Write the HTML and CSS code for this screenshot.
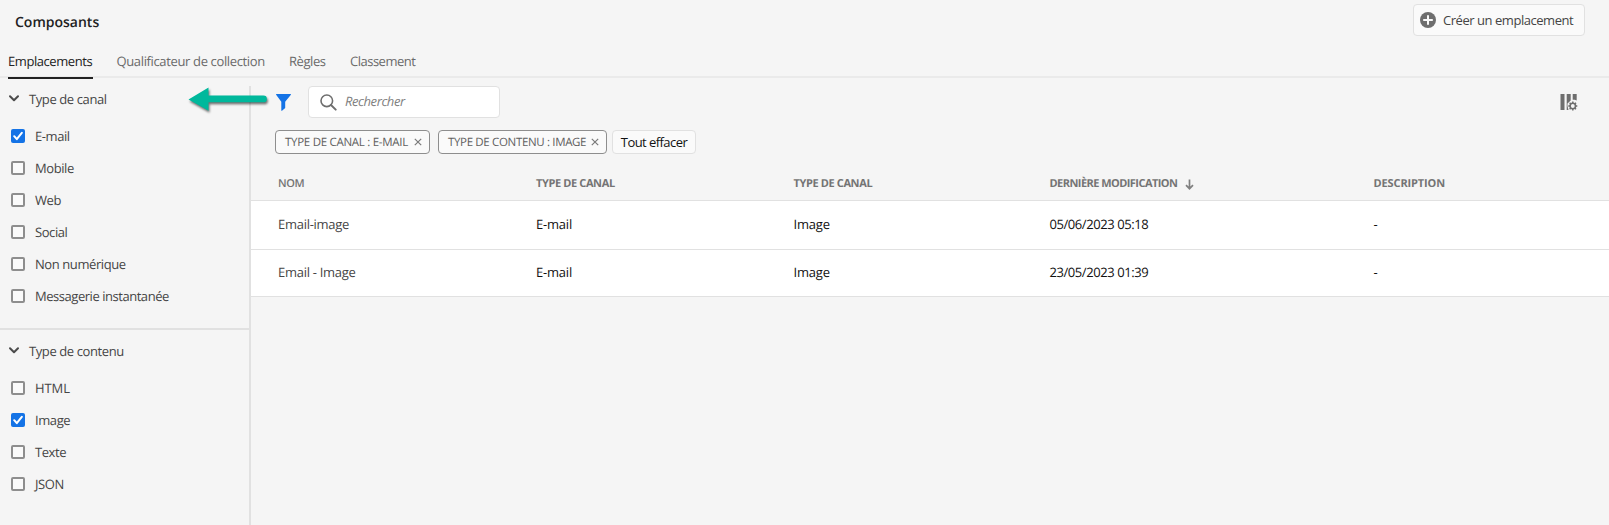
FILE: index.html
```
<!DOCTYPE html>
<html lang="fr">
<head>
<meta charset="utf-8">
<title>Composants</title>
<link rel="stylesheet" href="styles.css">
</head>
<body>
<header class="header">
  <h1 class="title">Composants</h1>
  <button class="create">
    <svg width="16" height="16" viewBox="0 0 16 16"><circle cx="8" cy="8" r="8" fill="#6e6e6e"/><path d="M8 3.2v9.6M3.2 8h9.6" stroke="#fafafa" stroke-width="2"/></svg>
    <span>Créer un emplacement</span>
  </button>
</header>
<nav class="tabs">
  <a class="tab tab-on t1">Emplacements</a>
  <a class="tab t2">Qualificateur de collection</a>
  <a class="tab t3">Règles</a>
  <a class="tab t4">Classement</a>
</nav>
<div class="body">
  <aside class="side">
    <section class="group">
      <h2 class="group-title"><svg class="chev" width="10" height="7" viewBox="0 0 10 7"><path d="M1 1.2l4 4 4-4" fill="none" stroke="#4b4b4b" stroke-width="2" stroke-linecap="round" stroke-linejoin="round"/></svg>Type de canal</h2>
      <label class="opt"><i class="box on"><svg width="10" height="10" viewBox="0 0 10 10"><path d="M1.2 5.2l2.6 3L8.8 1.8" fill="none" stroke="#fff" stroke-width="2" stroke-linecap="round" stroke-linejoin="round"/></svg></i>E-mail</label>
      <label class="opt"><i class="box"></i>Mobile</label>
      <label class="opt"><i class="box"></i>Web</label>
      <label class="opt"><i class="box"></i>Social</label>
      <label class="opt"><i class="box"></i>Non numérique</label>
      <label class="opt long"><i class="box"></i>Messagerie instantanée</label>
    </section>
    <section class="group">
      <h2 class="group-title"><svg class="chev" width="10" height="7" viewBox="0 0 10 7"><path d="M1 1.2l4 4 4-4" fill="none" stroke="#4b4b4b" stroke-width="2" stroke-linecap="round" stroke-linejoin="round"/></svg>Type de contenu</h2>
      <label class="opt caps"><i class="box"></i>HTML</label>
      <label class="opt"><i class="box on"><svg width="10" height="10" viewBox="0 0 10 10"><path d="M1.2 5.2l2.6 3L8.8 1.8" fill="none" stroke="#fff" stroke-width="2" stroke-linecap="round" stroke-linejoin="round"/></svg></i>Image</label>
      <label class="opt"><i class="box"></i>Texte</label>
      <label class="opt"><i class="box"></i>JSON</label>
    </section>
    <svg class="arrow" width="84" height="32" viewBox="0 0 84 32"><path d="M1.500 13.500L21.500 1.500v8h55a3.200 3.200 0 0 1 0 6.800h-55v8.500z" fill="#00b89c"/></svg>
  </aside>
  <main class="main">
    <div class="toolbar">
      <svg class="funnel" width="15" height="17" viewBox="0 0 15 17"><path d="M.5 0h14a.5.5 0 0 1 .4.8L9.2 7.800v6.200L6 16.700a.4.4 0 0 1-.7-.3V7.800L.1.800A.5.5 0 0 1 .5 0z" fill="#1473e6"/></svg>
      <div class="search">
        <svg width="17" height="17" viewBox="0 0 17 17"><circle cx="6.800" cy="6.800" r="5.800" fill="none" stroke="#6e6e6e" stroke-width="1.600"/><path d="M11 11l4.700 4.700" stroke="#6e6e6e" stroke-width="1.900" stroke-linecap="round"/></svg>
        <span>Rechercher</span>
      </div>
      <svg class="columns" width="18" height="18" viewBox="0 0 18 18"><path d="M.5 1h4v16h-4zM6.700 1h4v6.500L7.500 10.500v2.500l1 4H6.700zM12.700 1h4v6.500l-2-.8h-2z" fill="#6e6e6e"/><circle cx="12.800" cy="13" r="2.700" fill="none" stroke="#6e6e6e" stroke-width="1.600"/><path d="M12.800 8.500v1.700M12.800 15.800v1.700M8.300 13h1.700M15.600 13h1.700M9.600 9.800l1.200 1.200M14.800 15l1.200 1.200M9.600 16.200l1.200-1.200M14.800 11l1.200-1.200" stroke="#6e6e6e" stroke-width="1.500"/></svg>
    </div>
    <div class="chips">
      <span class="chip chip-a"><span>TYPE DE CANAL : E-MAIL</span><svg width="8" height="8" viewBox="0 0 8 8"><path d="M.8.8l6.400 6.400M7.200.8L.8 7.200" stroke="#7a7a7a" stroke-width="1.200"/></svg></span>
      <span class="chip chip-b"><span>TYPE DE CONTENU : IMAGE</span><svg width="8" height="8" viewBox="0 0 8 8"><path d="M.8.8l6.400 6.400M7.200.8L.8 7.200" stroke="#7a7a7a" stroke-width="1.200"/></svg></span>
      <button class="clear">Tout effacer</button>
    </div>
    <div class="table">
      <div class="row head">
        <span class="nom">NOM</span><span>TYPE DE CANAL</span><span>TYPE DE CANAL</span>
        <span class="sorted">DERNIÈRE MODIFICATION<svg width="9" height="11" viewBox="0 0 9 11"><path d="M4.500.5v9M1 6.200l3.500 3.500L8 6.200" fill="none" stroke="#808080" stroke-width="1.700"/></svg></span>
        <span class="desc">DESCRIPTION</span>
      </div>
      <div class="row r1"><span class="name">Email-image</span><span>E-mail</span><span>Image</span><span class="date">05/06/2023 05:18</span><span>-</span></div>
      <div class="row r2"><span class="name">Email - Image</span><span>E-mail</span><span>Image</span><span class="date">23/05/2023 01:39</span><span>-</span></div>
    </div>
  </main>
</div>
</body>
</html>
```
FILE: styles.css
```
* { box-sizing: border-box; }
body {
  margin: 0;
  height: 525px;
  overflow: hidden;
  display: flex;
  flex-direction: column;
  background: #f5f5f5;
  color: #454545;
  font: 400 13px/20px "Open Sans", sans-serif;
  letter-spacing: -0.42px;
  text-rendering: geometricPrecision;
  white-space: nowrap;
}
h1, h2 { margin: 0; }
svg { display: block; flex: none; }
button { font: inherit; letter-spacing: inherit; }

.header { height: 47px; display: flex; justify-content: space-between; align-items: flex-start; padding: 4px 24px 0 15px; }
.title { font-size: 14px; line-height: 20px; font-weight: 600; letter-spacing: 0; color: #222; margin-top: 9px; }
.create {
  display: flex; align-items: center; gap: 7px;
  width: 172px; height: 32px; padding: 0 0 0 6px;
  border: 1px solid #e1e1e1; border-radius: 4px;
  background: #fafafa; color: #454545; letter-spacing: -0.46px;
}

.tabs { height: 31px; flex: none; display: flex; gap: 24px; padding-left: 8px; border-bottom: 2px solid #eaeaea; }
.tab { height: 32px; padding-top: 4px; color: #6a6a6a; }
.tab-on { color: #222; border-bottom: 2px solid #222; }
.t1 { width: 84.5px; letter-spacing: -0.43px; }
.t2 { width: 148.500px; letter-spacing: -0.36px; }
.t3 { width: 37px; }
.t4 { letter-spacing: -0.5px; }

.body { flex: 1; display: flex; min-height: 0; }
.side { position: relative; width: 251px; display: flex; flex-direction: column; padding-top: 8px; }
.side::after { content: ""; position: absolute; right: 0; top: 8px; bottom: 0; width: 2px; background: #e1e1e1; }
.group { padding: 3px 0 16px; }
.group + .group { border-top: 2px solid #e1e1e1; padding-top: 11px; }
.group-title { display: flex; align-items: center; height: 20px; margin-bottom: 11px; padding-left: 9px; font-size: 13px; font-weight: 400; letter-spacing: -0.4px; }
.chev { margin: -1px 10px 0 0; }
.opt { display: flex; align-items: center; height: 32px; padding-left: 11px; gap: 10px; }
.long { letter-spacing: -0.46px; }
.caps { letter-spacing: -0.1px; }
.box { width: 14px; height: 14px; border: 2px solid #8e8e8e; border-radius: 2px; background: #fafafa; }
.box.on { display: flex; align-items: center; justify-content: center; border: 0; background: #1473e6; }
.arrow { position: absolute; left: 187px; top: 8px; z-index: 1; overflow: visible; filter: drop-shadow(1px 2px 1px rgba(0, 0, 0, .55)); }

.main { flex: 1; display: flex; flex-direction: column; }
.toolbar { display: flex; align-items: center; margin-top: 8px; height: 32px; padding: 0 31px 0 25px; }
.search { display: flex; align-items: center; gap: 8px; width: 192px; height: 32px; margin-left: 17px; padding-left: 11px; border: 1px solid #e1e1e1; border-radius: 4px; background: #fff; }
.search span { font-style: italic; color: #808080; letter-spacing: -0.42px; margin-top: -2px; }
.columns { margin-left: auto; }
.chips { display: flex; align-items: center; height: 24px; margin: 12px 0 0 24px; }
.chip { display: flex; align-items: center; height: 24px; padding-left: 9px; border: 1px solid #8e8e8e; border-radius: 4px; background: #fafafa; color: #606060; font-size: 11.500px; letter-spacing: -0.28px; margin-right: 8px; }
.chip > span { padding-top: 1px; }
.chip svg { margin-left: auto; margin-right: 7px; }
.chip-a { width: 155px; }
.chip-b { width: 169px; margin-right: 5px; letter-spacing: -0.34px; }
.clear { width: 84px; height: 24px; padding: 0; border: 1px solid #e1e1e1; border-radius: 4px; background: #fafafa; color: #111; letter-spacing: -0.56px; line-height: 20px; }

.row { display: grid; grid-template-columns: 258px 257.500px 256px 324px 1fr; align-items: center; padding-left: 27px; border-bottom: 1px solid #e1e1e1; background: #fff; color: #111; letter-spacing: -0.2px; }
.name { color: #454545; letter-spacing: -0.28px; }
.date { letter-spacing: -0.43px; }
.head { height: 47px; padding-top: 14px; background: transparent; color: #747474; font-size: 11px; font-weight: 700; letter-spacing: -0.38px; }
.nom { font-weight: 600; }
.sorted { display: flex; align-items: center; gap: 8px; letter-spacing: -0.55px; }
.desc { letter-spacing: -0.12px; }
.r1 { height: 49px; padding-bottom: 2px; }
.r2 { height: 47px; padding-bottom: 2px; }
```
